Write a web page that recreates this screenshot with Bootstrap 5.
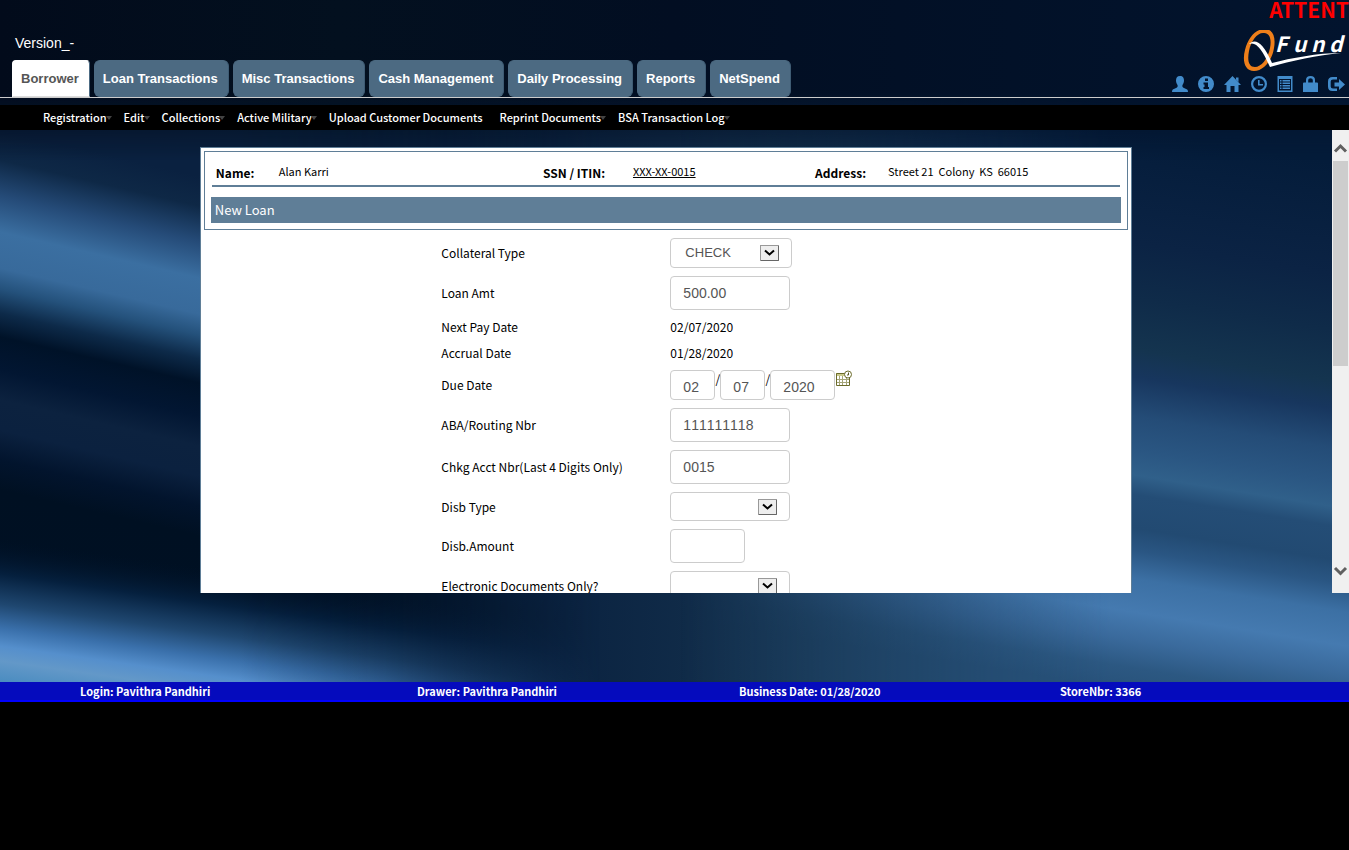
<!DOCTYPE html>
<html lang="en">
<head>
<meta charset="utf-8">
<meta name="viewport" content="width=device-width, initial-scale=1">
<title>QFund - New Loan</title>
<link href="https://cdn.jsdelivr.net/npm/bootstrap@5.3.0/dist/css/bootstrap.min.css" rel="stylesheet">
<style>
  :root { --steel: #5f7e97; --ui: "Noto Sans CJK SC", "Noto Sans", sans-serif; --arial: "Liberation Sans", Arial, sans-serif; }
  body { background: #000; font-family: var(--ui); font-size: 12px; line-height: 18px; color: #000; }
  .scene { isolation: isolate; padding-bottom: 89px; }
  .backdrop { position: absolute; inset: 0; z-index: -1; }
  .notice { height: 30px; font-size: 21px; line-height: 18px; color: #f00; }
  .masthead { border-bottom: 1px solid #ccc; height: 68px; }
  .version { font: 14px/18px var(--arial); padding: 4px 3px 8px; }
  .tabs { gap: 4px; }
  .tab-btn { border: 1px solid #4c6a82; border-right-color: #3f5c74; border-radius: 6px; background: #4c6a82; color: #fff; font: bold 13px/35px var(--arial); padding: 0 10px 0 8px; white-space: nowrap; }
  .tab-btn.active { background: #fff; color: #555; border-color: #fff #4c6a82 #ddd #fff; border-radius: 4px 4px 0 0; }
  .tools { gap: 10px; padding-right: 4px; }
  .tools a { color: #428bca; display: block; height: 16px; }
  .tools svg { display: block; fill: currentColor; }
  .menu { background: #000; height: 25px; margin-top: 7px; padding-left: 43px; gap: 17px; }
  .menu a { color: #fff; font-size: 11px; font-weight: 500; text-decoration: none; position: relative; line-height: 25px; white-space: nowrap; }
  .menu .drop::after { content: ""; position: absolute; right: -5px; top: 11px; border: 3px solid transparent; border-top: 4px solid #444; border-bottom: 0; }
  .pane { height: 463px; overflow: hidden; }
  .sheet { width: 70%; background: #fff; border: 1px solid var(--steel); margin: 17px auto 0; padding: 3px; flex: none; }
  .headbox { border: 1px solid var(--steel); padding: 6px; }
  .who { display: grid; grid-template-columns: 63fr 264fr 90fr 182fr 73fr 232fr; border-bottom: 2px solid var(--steel); margin: 0 1px 10px; padding: 3px 0 0 4px; line-height: 20px; font-size: 11px; }
  .who dt { font-size: 12px; line-height: 24px; white-space: nowrap; }
  .who dd { margin: 0; white-space: nowrap; }
  .title-bar { background: var(--steel); color: #fff; font-size: 13px; line-height: 26px; padding: 0 4px; margin: 0; font-weight: 400; }
  .loan { display: grid; grid-template-columns: 229px 1fr; row-gap: 8px; align-items: center; padding: 8px 0 8px; margin-left: 25.7%; }
  .loan .field, .loan .choice { border: 1px solid #ccc; border-radius: 4px; background-color: #fff; color: #555; font: 14px/20px var(--arial); font-kerning: none; padding: 0 12px; width: 120px; height: 34px; display: block; }
  .loan .choice { appearance: none; font-size: 13px; height: 29px; padding: 0 32px 0 14px;
    background: url("data:image/svg+xml,%3Csvg xmlns='http://www.w3.org/2000/svg' width='19' height='16'%3E%3Crect x='.5' y='.5' width='18' height='15' fill='%23eee' stroke='%23999'/%3E%3Cpath d='M1 15.5h17.500V1' fill='none' stroke='%23666'/%3E%3Cpath d='M5 5.500l4.500 4 4.500-4' fill='none' stroke='%23000' stroke-width='2'/%3E%3C/svg%3E") no-repeat right 12px center #fff; }
  .loan .choice.wide { width: 122px; height: 30px; }
  .loan .short { width: 75px; }
  .loan .dd { width: 45px; height: 30px; padding-top: 4px; }
  .loan .yyyy { width: 65px; height: 30px; padding-top: 4px; }
  .slash { width: 5px; text-align: center; }
  .scroller { width: 17px; background: #f0f0f0; padding: 12px 1px 16px; }
  .scroller .thumb { background: #cdcdcd; height: 205px; }
  .status { background: #050bbd; border-bottom: 2px solid #00f; color: #fff; font-size: 11px; font-weight: 700; display: grid; grid-template-columns: 337fr 322fr 321fr 289fr; padding-left: 80px; }
</style>
</head>
<body>
<div class="scene position-relative">
  <svg class="backdrop w-100 h-100" viewBox="0 0 1349 682" preserveAspectRatio="none" aria-hidden="true">
    <defs>
      <linearGradient id="base" x1="0" y1="0" x2="1" y2="0">
        <stop offset="0" stop-color="#000f22"/><stop offset=".2" stop-color="#02142c"/><stop offset=".42" stop-color="#0b2341"/><stop offset=".6" stop-color="#15334f"/><stop offset="1" stop-color="#24507c"/>
      </linearGradient>
      <linearGradient id="west" gradientUnits="userSpaceOnUse" x1="0" y1="130" x2="0" y2="730" gradientTransform="skewY(13)">
        <stop offset="0" stop-color="#0a2140"/><stop offset=".05" stop-color="#0e2846"/><stop offset=".11" stop-color="#254b78"/><stop offset=".17" stop-color="#3b6fa1"/><stop offset=".23" stop-color="#386a9b"/><stop offset=".265" stop-color="#24517b"/><stop offset=".305" stop-color="#0d2a49"/><stop offset=".345" stop-color="#001228"/><stop offset=".4" stop-color="#021632"/><stop offset=".45" stop-color="#0c223f"/><stop offset=".5" stop-color="#0b213f"/><stop offset=".55" stop-color="#02142d"/><stop offset=".6" stop-color="#001022"/><stop offset="1" stop-color="#001126"/>
      </linearGradient>
      <linearGradient id="glow" gradientUnits="userSpaceOnUse" x1="0" y1="130" x2="0" y2="730" gradientTransform="skewY(8)">
        <stop offset=".68" stop-color="#001126" stop-opacity="0"/><stop offset=".74" stop-color="#05203e"/><stop offset=".79" stop-color="#1f4770"/><stop offset=".83" stop-color="#3a70ab"/><stop offset=".86" stop-color="#558fcc"/><stop offset=".885" stop-color="#6398c8"/><stop offset=".92" stop-color="#4a8cc0"/><stop offset="1" stop-color="#3674a8"/>
      </linearGradient>
      <linearGradient id="east" gradientUnits="userSpaceOnUse" x1="0" y1="130" x2="0" y2="690" gradientTransform="translate(1131 0) skewY(9) translate(-1131 0)">
        <stop offset="0" stop-color="#041c3a"/><stop offset=".2" stop-color="#0b2344"/><stop offset=".3" stop-color="#0f2b49"/><stop offset=".39" stop-color="#14344f"/><stop offset=".44" stop-color="#17365e"/><stop offset=".51" stop-color="#244c77"/><stop offset=".57" stop-color="#2a5682"/><stop offset=".615" stop-color="#30608a"/><stop offset=".65" stop-color="#244d76"/><stop offset=".71" stop-color="#224a72"/><stop offset=".75" stop-color="#2a5683"/><stop offset=".8" stop-color="#3c70a4"/><stop offset=".86" stop-color="#457ab0"/><stop offset=".91" stop-color="#3a6a9c"/><stop offset=".96" stop-color="#2c5882"/><stop offset="1" stop-color="#28527a"/>
      </linearGradient>
      <linearGradient id="fadeW" gradientUnits="userSpaceOnUse" x1="240" y1="0" x2="600" y2="0"><stop offset="0" stop-color="#fff"/><stop offset=".4" stop-color="#bbb"/><stop offset="1" stop-color="#000"/></linearGradient>
      <linearGradient id="fadeE" gradientUnits="userSpaceOnUse" x1="680" y1="0" x2="1110" y2="0"><stop offset="0" stop-color="#000"/><stop offset="1" stop-color="#fff"/></linearGradient>
      <linearGradient id="dusk" x1="0" y1="0" x2="1" y2="0"><stop offset="0" stop-color="#020b1b"/><stop offset=".25" stop-color="#03101f"/><stop offset=".5" stop-color="#020e22"/><stop offset="1" stop-color="#02142e"/></linearGradient>
      <linearGradient id="fadeN" gradientUnits="userSpaceOnUse" x1="0" y1="90" x2="0" y2="160"><stop offset="0" stop-color="#fff"/><stop offset=".5" stop-color="#888"/><stop offset="1" stop-color="#000"/></linearGradient>
      <mask id="mW" maskUnits="userSpaceOnUse" x="0" y="0" width="1349" height="682"><rect width="1349" height="682" fill="url(#fadeW)"/></mask>
      <mask id="mE" maskUnits="userSpaceOnUse" x="0" y="0" width="1349" height="682"><rect width="1349" height="682" fill="url(#fadeE)"/></mask>
      <mask id="mN" maskUnits="userSpaceOnUse" x="0" y="0" width="1349" height="682"><rect width="1349" height="682" fill="url(#fadeN)"/></mask>
    </defs>
    <rect width="1349" height="682" fill="url(#base)"/>
    <g mask="url(#mW)">
      <rect width="1349" height="682" fill="url(#west)"/>
      <rect width="1349" height="682" fill="url(#glow)"/>
    </g>
    <rect width="1349" height="682" fill="url(#east)" mask="url(#mE)"/>
    <rect width="1349" height="682" fill="url(#dusk)" mask="url(#mN)"/>
  </svg>

  <div class="notice fw-bold text-end">ATTENT</div>

  <header class="masthead d-flex justify-content-between">
    <div class="ps-2 ms-1">
      <div class="version text-white">Version_-</div>
      <nav class="tabs d-flex" aria-label="Modules">
        <button type="button" class="tab-btn active">Borrower</button>
        <button type="button" class="tab-btn">Loan Transactions</button>
        <button type="button" class="tab-btn">Misc Transactions</button>
        <button type="button" class="tab-btn">Cash Management</button>
        <button type="button" class="tab-btn">Daily Processing</button>
        <button type="button" class="tab-btn">Reports</button>
        <button type="button" class="tab-btn">NetSpend</button>
      </nav>
    </div>
    <div class="d-flex flex-column align-items-end">
      <svg width="106" height="46" viewBox="0 0 106 46" role="img" aria-label="QFund">
        <path fill-rule="evenodd" fill="#ee7f1a" d="M20-1C30-2 33 7 31 18 29 31 20 41 11 41 2 41-1 31 2 20 5 8 12 0 20-1ZM20 3C14 3 8 11 6 21 4 31 6 37 12 37 18 37 25 29 27 18 29 8 26 2 20 3Z"/>
        <path fill="#fff" d="M6 14C12 8 20 12 29 33 48 28 75 23 98 23 75 25 48 31 27 37 19 19 13 11 6 14Z"/>
        <text x="32 50 68 86" y="22" fill="#fff" font-family="Noto Sans CJK SC, sans-serif" font-size="21" font-weight="700" font-style="italic">Fund</text>
      </svg>
      <div class="tools d-flex">
        <a href="#" aria-label="User"><svg width="16" height="16" viewBox="0 0 16 16"><path d="M8 0C5 0 4 2 4 4.500 4 7 5 8 5.500 9 6 10.500 5.500 11.200 4 12L.8 13.500Q0 14 0 16H16Q16 14 15.200 13.500L12 12C10.500 11.200 10 10.500 10.500 9 11 8 12 7 12 4.500 12 2 11 0 8 0Z"/></svg></a>
        <a href="#" aria-label="Information"><svg width="16" height="16" viewBox="0 0 16 16"><path fill-rule="evenodd" d="M8 0a8 8 0 1 0 0 16A8 8 0 0 0 8 0ZM7 2.500h3v2.500H7ZM5.500 6.500H10V11h1v2H5.500v-2h1V8.500h-1Z"/></svg></a>
        <a href="#" aria-label="Home"><svg width="17" height="16" viewBox="0 0 17 16"><path d="M8.500 0 17 9H14.500V16H10.500V10H6.500V16H2.500V9H0L8.500 0ZM12 1.500h2.500V6L12 3.500Z"/></svg></a>
        <a href="#" aria-label="Time clock"><svg width="16" height="16" viewBox="0 0 16 16"><path fill-rule="evenodd" d="M8 0a8 8 0 1 0 0 16A8 8 0 0 0 8 0ZM8 2.200a5.800 5.800 0 1 1 0 11.600A5.800 5.800 0 0 1 8 2.200ZM7 4h1.600v4H12v1.600H7Z"/></svg></a>
        <a href="#" aria-label="List"><svg width="16" height="16" viewBox="0 0 16 16"><path fill-rule="evenodd" d="M.5 0h15v16H.5ZM2 3v11.500h12V3ZM3 4h1.500v1.500H3ZM5.500 4H13v1.500H5.500ZM3 6.500h1.500V8H3ZM5.500 6.500H13V8H5.500ZM3 9h1.500v1.500H3ZM5.500 9H13v1.500H5.500ZM3 11.500h1.500V13H3ZM5.500 11.500H13V13H5.500Z"/></svg></a>
        <a href="#" aria-label="Lock"><svg width="15" height="16" viewBox="0 0 15 16"><path fill-rule="evenodd" d="M3 6.500V4Q3 0 7.500 0T12 4V6.500H14Q15 6.500 15 7.500V16H0V7.500Q0 6.500 1 6.500ZM5.200 6.500h4.600V4Q9.800 2.200 7.500 2.200T5.200 4Z"/></svg></a>
        <a href="#" aria-label="Log out"><svg width="17" height="16" viewBox="0 0 17 16"><path d="M9 1H4.500Q0 1 0 5.500v5Q0 15 4.500 15H9V12.500H5Q2.700 12.500 2.700 10.500v-5Q2.700 3.500 5 3.500H9ZM11 3 17 8.500 11 14V10.500H6.500V6.500H11Z"/></svg></a>
      </div>
    </div>
  </header>

  <nav class="menu d-flex" aria-label="Borrower menu">
    <a href="#" class="drop">Registration</a>
    <a href="#" class="drop">Edit</a>
    <a href="#" class="drop">Collections</a>
    <a href="#" class="drop">Active Military</a>
    <a href="#">Upload Customer Documents</a>
    <a href="#" class="drop">Reprint Documents</a>
    <a href="#" class="drop">BSA Transaction Log</a>
  </nav>

  <div class="pane d-flex">
    <main class="flex-grow-1">
      <div class="sheet">
        <div class="headbox">
          <dl class="who">
            <dt>Name:</dt><dd>Alan Karri</dd>
            <dt>SSN / ITIN:</dt><dd><a href="#" class="text-black">XXX-XX-0015</a></dd>
            <dt>Address:</dt><dd>Street 21&nbsp; Colony&nbsp; KS&nbsp; 66015</dd>
          </dl>
          <h1 class="title-bar">New Loan</h1>
        </div>
        <form class="loan">
          <label for="collateral">Collateral Type</label>
          <select id="collateral" class="choice wide"><option>CHECK</option></select>
          <label for="amount">Loan Amt</label>
          <input id="amount" class="field" type="text" value="500.00">
          <span>Next Pay Date</span><span>02/07/2020</span>
          <span>Accrual Date</span><span>01/28/2020</span>
          <label for="due-month">Due Date</label>
          <div class="d-flex align-items-start">
            <input id="due-month" class="field dd" type="text" value="02"><span class="slash">/</span>
            <input class="field dd" type="text" value="07" aria-label="Due day"><span class="slash">/</span>
            <input class="field yyyy" type="text" value="2020" aria-label="Due year">
            <svg width="18" height="18" viewBox="0 0 18 18" aria-hidden="true">
              <path d="M1.500 3.500h13v12h-13Z" fill="#fff"/>
              <path d="M1 3h13v3H1Z" fill="#c9c98a"/>
              <path d="M2 9.500h12M2 12.500h12M4.500 6v9M7.500 6v9M11.500 6v9" stroke="#a5a578" fill="none"/>
              <path d="M1.500 3.500h13v12h-13Z" fill="none" stroke="#6b6b2a"/>
              <circle cx="13" cy="4.500" r="3.500" fill="#fff" stroke="#6b6b2a"/>
              <path d="M13.500 2.500V5H12" fill="none" stroke="#555520"/>
            </svg>
          </div>
          <label for="aba">ABA/Routing Nbr</label>
          <input id="aba" class="field" type="text" value="111111118">
          <label for="acct">Chkg Acct Nbr(Last 4 Digits Only)</label>
          <input id="acct" class="field" type="text" value="0015">
          <label for="disb-type">Disb Type</label>
          <select id="disb-type" class="choice"><option></option></select>
          <label for="disb-amt">Disb.Amount</label>
          <input id="disb-amt" class="field short" type="text">
          <label for="edocs">Electronic Documents Only?</label>
          <select id="edocs" class="choice"><option></option></select>
        </form>
      </div>
    </main>
    <div class="scroller d-flex flex-column" aria-hidden="true">
      <svg width="15" height="19" viewBox="0 0 15 19"><path d="M2 9.500 7.500 4 13 9.500" fill="none" stroke="#606060" stroke-width="3"/></svg>
      <div class="thumb"></div>
      <svg class="mt-auto" width="15" height="13" viewBox="0 0 15 13"><path d="M2 4 7.500 9.500 13 4" fill="none" stroke="#606060" stroke-width="3"/></svg>
    </div>
  </div>
</div>

<footer class="status">
  <div>Login: Pavithra Pandhiri</div>
  <div>Drawer: Pavithra Pandhiri</div>
  <div>Business Date: 01/28/2020</div>
  <div>StoreNbr: 3366</div>
</footer>
<script src="https://cdn.jsdelivr.net/npm/bootstrap@5.3.0/dist/js/bootstrap.bundle.min.js"></script>
</body>
</html>
